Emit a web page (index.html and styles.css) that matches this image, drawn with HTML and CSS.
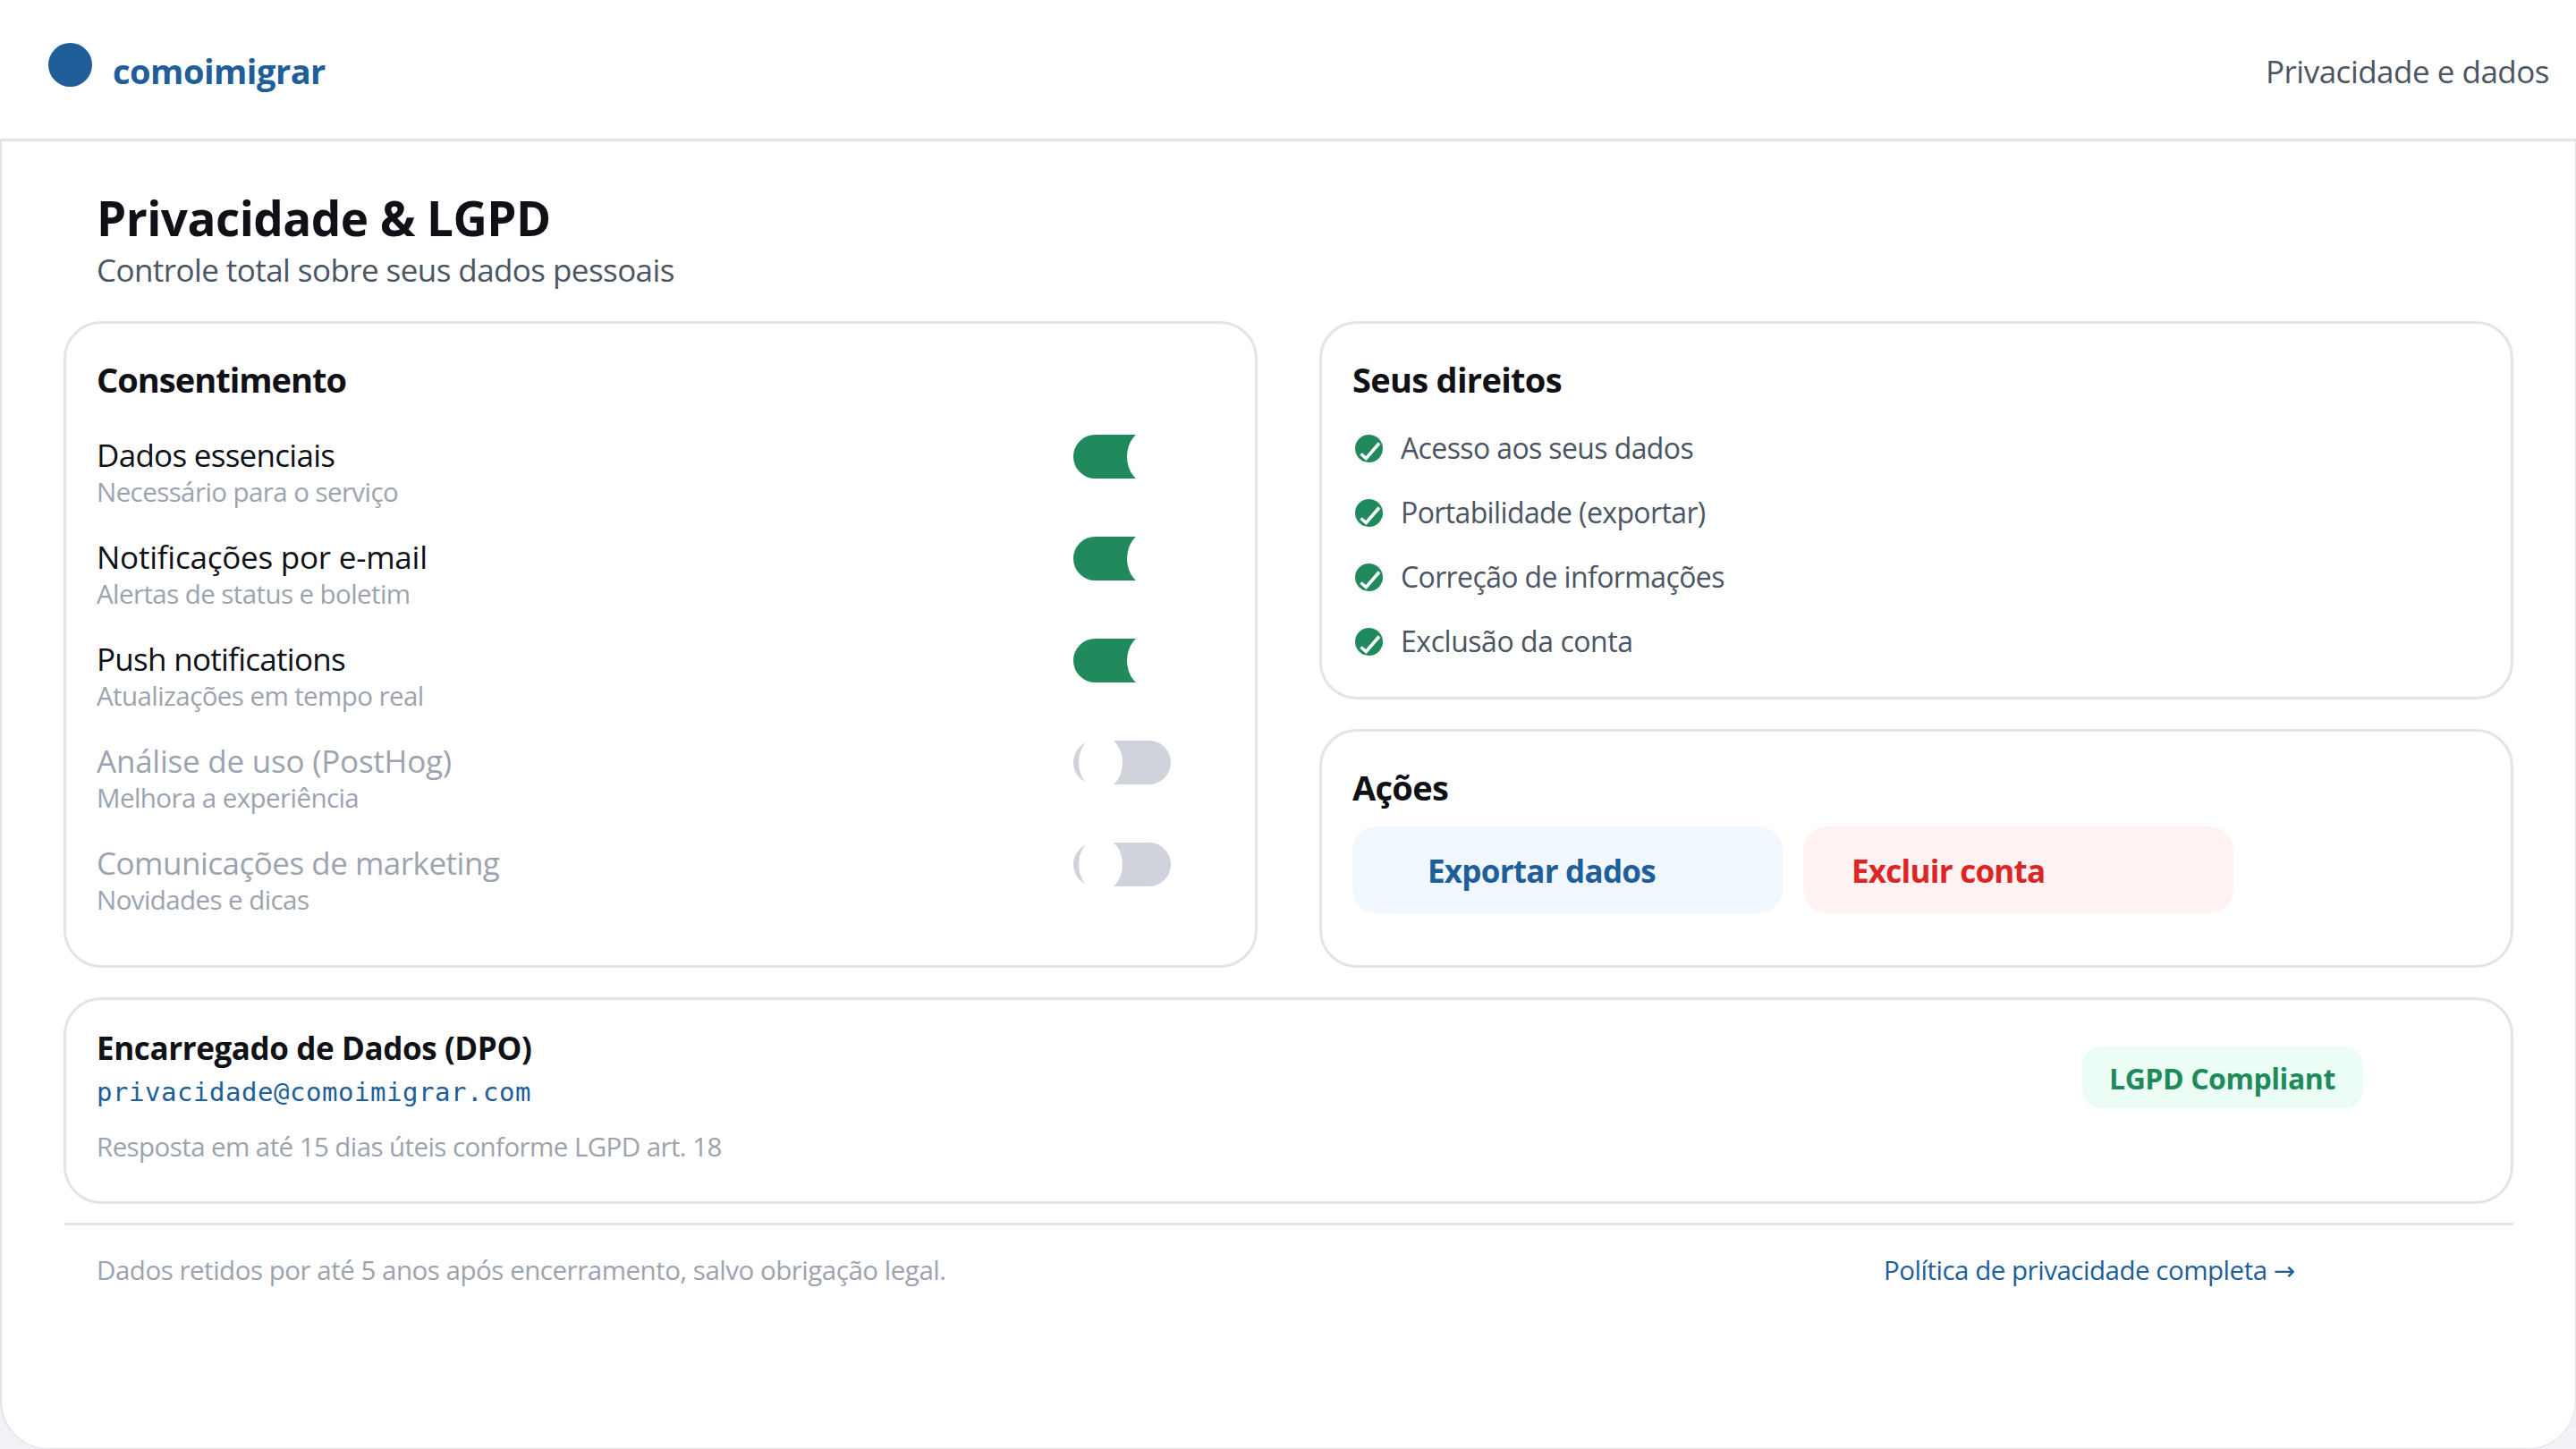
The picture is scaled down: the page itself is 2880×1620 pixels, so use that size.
FILE: index.html
```
<!DOCTYPE html>
<html lang="pt-BR">
<head>
<meta charset="UTF-8">
<title>Privacidade e dados - comoimigrar</title>

<link rel="stylesheet" href="styles.css">

</head>
<body>

<header class="topbar">
	<span class="logo"></span>
	<span class="brand">comoimigrar</span>
	<span class="section">Privacidade e dados</span>
</header>

<main class="page">
	<h1>Privacidade &amp; LGPD</h1>
	<p class="subtitle">Controle total sobre seus dados pessoais</p>

	<div class="columns">
		<section class="card">
			<h2 class="tight">Consentimento</h2>
			<ul class="consent-list">
				<li>
					<div>
						<div class="name tight">Dados essenciais</div>
						<div class="desc">Necessário para o serviço</div>
					</div>
					<span class="toggle on"></span>
				</li>
				<li>
					<div>
						<div class="name loose">Notificações por e-mail</div>
						<div class="desc">Alertas de status e boletim</div>
					</div>
					<span class="toggle on"></span>
				</li>
				<li>
					<div>
						<div class="name tight">Push notifications</div>
						<div class="desc">Atualizações em tempo real</div>
					</div>
					<span class="toggle on"></span>
				</li>
				<li class="off">
					<div>
						<div class="name loose">Análise de uso (PostHog)</div>
						<div class="desc">Melhora a experiência</div>
					</div>
					<span class="toggle"></span>
				</li>
				<li class="off">
					<div>
						<div class="name">Comunicações de marketing</div>
						<div class="desc">Novidades e dicas</div>
					</div>
					<span class="toggle"></span>
				</li>
			</ul>
		</section>

		<div class="side">
			<section class="card rights">
				<h2>Seus direitos</h2>
				<ul class="rights-list">
					<li>
						<svg class="check" viewBox="0 0 31 31"><circle cx="15.5" cy="15.5" r="15.5"/><path d="M6.5 21.5l5.8 5L27 9.5"/></svg>
						Acesso aos seus dados
					</li>
					<li>
						<svg class="check" viewBox="0 0 31 31"><circle cx="15.5" cy="15.5" r="15.5"/><path d="M6.5 21.5l5.8 5L27 9.5"/></svg>
						Portabilidade (exportar)
					</li>
					<li>
						<svg class="check" viewBox="0 0 31 31"><circle cx="15.5" cy="15.5" r="15.5"/><path d="M6.5 21.5l5.8 5L27 9.5"/></svg>
						Correção de informações
					</li>
					<li class="loose">
						<svg class="check" viewBox="0 0 31 31"><circle cx="15.5" cy="15.5" r="15.5"/><path d="M6.5 21.5l5.8 5L27 9.5"/></svg>
						Exclusão da conta
					</li>
				</ul>
			</section>

			<section class="card actions">
				<h2>Ações</h2>
				<div class="buttons">
					<button type="button" class="btn btn-export">Exportar dados</button>
					<button type="button" class="btn btn-delete">Excluir conta</button>
				</div>
			</section>
		</div>
	</div>

	<section class="card dpo">
		<div>
			<h3>Encarregado de Dados (DPO)</h3>
			<a class="email">privacidade@comoimigrar.com</a>
			<p class="note">Resposta em até 15 dias úteis conforme LGPD art. 18</p>
		</div>
		<span class="badge">LGPD Compliant</span>
	</section>

	<footer>
		<span>Dados retidos por até 5 anos após encerramento, salvo obrigação legal.</span>
		<a class="policy">Política de privacidade completa <span class="arrow">→</span></a>
	</footer>
</main>

</body>
</html>
```

FILE: styles.css
```
* {
	box-sizing: border-box;
	margin: 0;
	padding: 0;
}

body {
	background: #f0f2f5;
	color: #0f1117;
	font-family: "Open Sans", "Noto Sans", sans-serif;
	height: 1620px;
	overflow: hidden;
}

ul {
	list-style-type: none;
}

/* header */
.topbar {
	display: flex;
	align-items: flex-start;
	height: 158px;
	padding: 48px 30px 0 54px;
	background: #fff;
	border-bottom: 3px solid #e1e4e9;
}

.logo {
	width: 49px;
	height: 49px;
	border-radius: 50%;
	background: #205e9a;
}

.brand {
	margin: 5px 0 0 23px;
	font-size: 38px;
	font-weight: 700;
	line-height: 52px;
	letter-spacing: -0.5px;
	color: #205e9a;
}

.section {
	margin: 8px 0 0 auto;
	font-size: 35px;
	line-height: 48px;
	letter-spacing: -0.5px;
	color: #4b5563;
}

/* page */
.page {
	height: 1462px;
	padding: 51px 69px 0;
	background: #fff;
	border: solid #e1e4e9;
	border-width: 0 1px 1px 2px;
	border-radius: 0 0 54px 54px;
}

h1 {
	padding-left: 37px;
	font-size: 53px;
	line-height: 69px;
	letter-spacing: -0.55px;
}

.subtitle {
	padding-left: 37px;
	font-size: 35px;
	line-height: 48px;
	letter-spacing: -0.57px;
	color: #4b5563;
}

.columns {
	display: grid;
	grid-template-columns: 1fr 1fr;
	gap: 69px;
	height: 723px;
	margin-top: 33px;
}

.side {
	display: flex;
	flex-direction: column;
	gap: 33px;
}

.card {
	padding: 36px 34px 0;
	border: 3px solid #e1e4e9;
	border-radius: 42px;
}

.rights {
	height: 423px;
}

.actions {
	height: 267px;
}

h2 {
	font-size: 38px;
	line-height: 52px;
	letter-spacing: -0.7px;
}

h2.tight {
	letter-spacing: -0.98px;
}

/* consent */
.consent-list {
	margin-top: 35px;
	padding-right: 60px;
}

.consent-list li {
	display: flex;
	justify-content: space-between;
	height: 114px;
}

.name {
	font-size: 35px;
	line-height: 48px;
	letter-spacing: -0.5px;
}

.name.tight {
	letter-spacing: -0.72px;
}

.name.loose {
	letter-spacing: -0.23px;
}

.off .name {
	color: #9ca3af;
}

.desc {
	font-size: 29.5px;
	line-height: 34px;
	letter-spacing: -0.58px;
	color: #9ca3af;
}

.toggle {
	position: relative;
	width: 109px;
	height: 49px;
	margin-top: 1px;
	border-radius: 24.5px;
	background: #d0d3dc;
}

.toggle::after {
	content: "";
	position: absolute;
	top: -6px;
	left: 6px;
	width: 49px;
	height: 61px;
	border-radius: 50%;
	background: #fff;
}

.toggle.on {
	background: linear-gradient(to right, #208a5c 85px, #fff 85px);
}

.toggle.on::after {
	left: 60px;
}

/* rights */
.rights-list {
	margin-top: 29px;
	padding-left: 3px;
}

.rights-list li {
	display: flex;
	align-items: flex-start;
	gap: 20px;
	height: 72px;
	font-size: 32px;
	line-height: 44px;
	letter-spacing: -0.62px;
	color: #4b5563;
}

.rights-list li.loose {
	letter-spacing: -0.45px;
}

.check {
	width: 31px;
	height: 31px;
	margin-top: 7px;
}

.check circle {
	fill: #208a5c;
}

.check path {
	fill: none;
	stroke: #fff;
	stroke-width: 3.6;
}

/* actions */
.buttons {
	display: flex;
	gap: 23px;
	margin-top: 18px;
}

.btn {
	width: 481px;
	height: 97px;
	padding-top: 2px;
	border: 0;
	border-radius: 27px;
	font-family: inherit;
	font-size: 35px;
	font-weight: 700;
	line-height: 48px;
	letter-spacing: -0.75px;
	text-align: left;
}

.btn-export {
	padding-left: 84px;
	background: #f0f7ff;
	color: #205e9a;
}

.btn-delete {
	padding-left: 54px;
	background: #fef2f2;
	color: #dc2626;
}

/* dpo */
.dpo {
	display: flex;
	justify-content: space-between;
	align-items: flex-start;
	height: 231px;
	margin-top: 33px;
	padding: 30px 165px 0 34px;
}

h3 {
	font-size: 35px;
	line-height: 48px;
	letter-spacing: -0.4px;
}

.email {
	display: block;
	margin-top: 5px;
	font-family: "DejaVu Sans Mono", monospace;
	font-size: 29px;
	line-height: 40px;
	letter-spacing: 0.54px;
	color: #205e9a;
}

.note {
	margin-top: 22px;
	font-size: 29.5px;
	line-height: 38px;
	letter-spacing: -0.58px;
	color: #9ca3af;
}

.badge {
	width: 314px;
	height: 69px;
	margin-top: 22px;
	padding: 14px 0 0 30px;
	border-radius: 21px;
	background: #ecfdf5;
	font-size: 32px;
	font-weight: 700;
	line-height: 44px;
	letter-spacing: -0.44px;
	color: #208a5c;
	white-space: nowrap;
}

/* footer */
footer {
	display: flex;
	justify-content: space-between;
	margin: 21px 0 0 1px;
	padding: 31px 0 0 36px;
	border-top: 3px solid #e1e4e9;
	font-size: 29.5px;
	line-height: 38px;
	letter-spacing: -0.48px;
	color: #9ca3af;
}

.policy {
	width: 704px;
	color: #205e9a;
}

.arrow {
	font-family: "DejaVu Sans", sans-serif;
	font-size: 29px;
	line-height: 1;
}
```
